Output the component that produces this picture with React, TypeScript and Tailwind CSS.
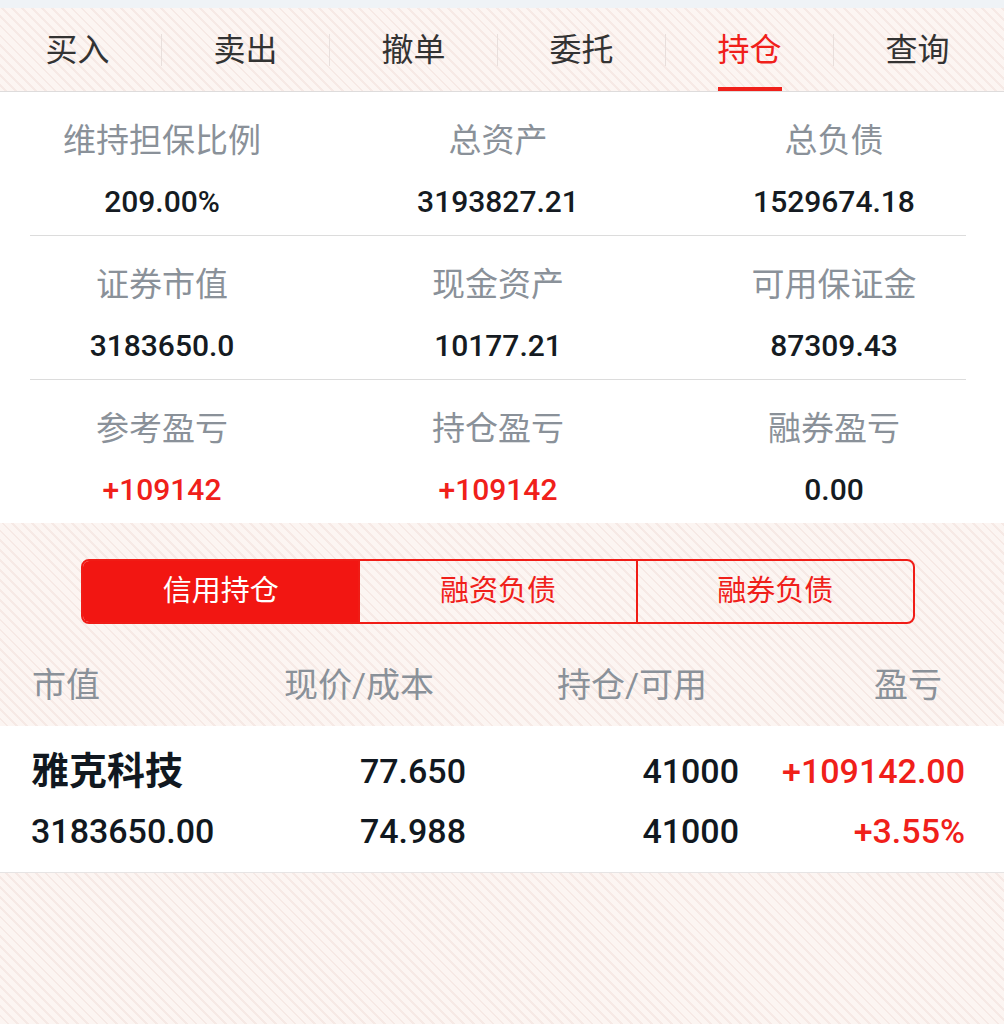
import React from "react";

const stripes =
  "bg-[#fcf5f2] bg-[image:repeating-linear-gradient(45deg,#fcf5f2_0px,#fcf5f2_5px,#f6e9e5_5px,#f6e9e5_7px)]";

const tabs = ["买入", "卖出", "撤单", "委托", "持仓", "查询"];

const summary = [
  [
    { label: "维持担保比例", value: "209.00%" },
    { label: "总资产", value: "3193827.21" },
    { label: "总负债", value: "1529674.18" },
  ],
  [
    { label: "证券市值", value: "3183650.0" },
    { label: "现金资产", value: "10177.21" },
    { label: "可用保证金", value: "87309.43" },
  ],
  [
    { label: "参考盈亏", value: "+109142", red: true },
    { label: "持仓盈亏", value: "+109142", red: true },
    { label: "融券盈亏", value: "0.00" },
  ],
];

const segments = ["信用持仓", "融资负债", "融券负债"];

const App = () => {
  const active = 4;

  return (
    <div
      className={`min-h-screen w-full overflow-hidden ${stripes} font-['Roboto','Noto_Sans_CJK_SC',sans-serif]`}
    >
      {/* status strip */}
      <div className="h-[8px] bg-[#eff3f6]" />

      {/* top tabs */}
      <div className="h-[84px] border-b border-[#dedcdc]">
        <div className="-ml-[6px] flex h-full">
          {tabs.map((t, i) => (
            <React.Fragment key={t}>
              {i > 0 && <div className="h-[32px] w-0 self-center border-l border-[#e8dfdc]" />}
              <div className="relative flex h-full w-[167px] shrink-0 items-center justify-center">
                <span
                  className={`text-[32px] leading-[40px] ${
                    i === active ? "text-[#f0201a]" : "text-[#333333]"
                  }`}
                >
                  {t}
                </span>
                {i === active && (
                  <div className="absolute bottom-0 left-1/2 h-[4px] w-[64px] -translate-x-1/2 bg-[#f0201a]" />
                )}
              </div>
            </React.Fragment>
          ))}
        </div>
      </div>

      {/* account summary */}
      <div className="bg-white">
        {summary.map((row, r) => (
          <div key={r} className="pl-[30px] pr-[38px]">
            <div className="-ml-[36px] flex pt-[29px] pb-[13px]">
              {row.map((c) => (
                <div key={c.label} className="flex w-[336px] shrink-0 flex-col items-center">
                  <span className="text-[33px] leading-[40px] text-[#8a9199]">{c.label}</span>
                  <span
                    className={`mt-[21px] text-[30px] font-medium leading-[40px] ${
                      c.red ? "text-[#f0201a]" : "text-[#151b22]"
                    }`}
                  >
                    {c.value}
                  </span>
                </div>
              ))}
            </div>
            {r < summary.length - 1 && <div className="h-px bg-[#dcdcdc]" />}
          </div>
        ))}
      </div>

      {/* segment switch */}
      <div className="pt-[36px]">
        <div className="ml-[81px] flex h-[65px] w-[834px] overflow-hidden rounded-[8px] border-2 border-[#f01c16]">
          {segments.map((s, i) => (
            <div
              key={s}
              className={`flex flex-1 items-center justify-center text-[29px] ${
                i === 0 ? "bg-[#f21612] text-white" : "border-l-2 border-[#f01c16] text-[#f0201a]"
              }`}
            >
              {s}
            </div>
          ))}
        </div>
      </div>

      {/* column headers */}
      <div className="flex pt-[41px] pb-[21px] pl-[32px] pr-[62px] text-[34px] leading-[40px] text-[#8a9199]">
        <span className="w-[252px]">市值</span>
        <span className="w-[273px]">现价/成本</span>
        <span className="flex-1">持仓/可用</span>
        <span>盈亏</span>
      </div>

      {/* position list */}
      <div className="border-b border-[#e6e4e4] bg-white pt-[25px] pb-[21px] pl-[31px] pr-[39px] text-[34px] font-medium leading-[40px] text-[#111820]">
        <div className="flex">
          <span className="w-[300px] text-[38px] font-bold">雅克科技</span>
          <span className="w-[135px] text-right">77.650</span>
          <span className="w-[273px] text-right">41000</span>
          <span className="flex-1 text-right text-[#f0201a]">+109142.00</span>
        </div>
        <div className="mt-[20px] flex">
          <span className="w-[300px]">3183650.00</span>
          <span className="w-[135px] text-right">74.988</span>
          <span className="w-[273px] text-right">41000</span>
          <span className="flex-1 text-right text-[#f0201a]">+3.55%</span>
        </div>
      </div>
    </div>
  );
};

export default App;
